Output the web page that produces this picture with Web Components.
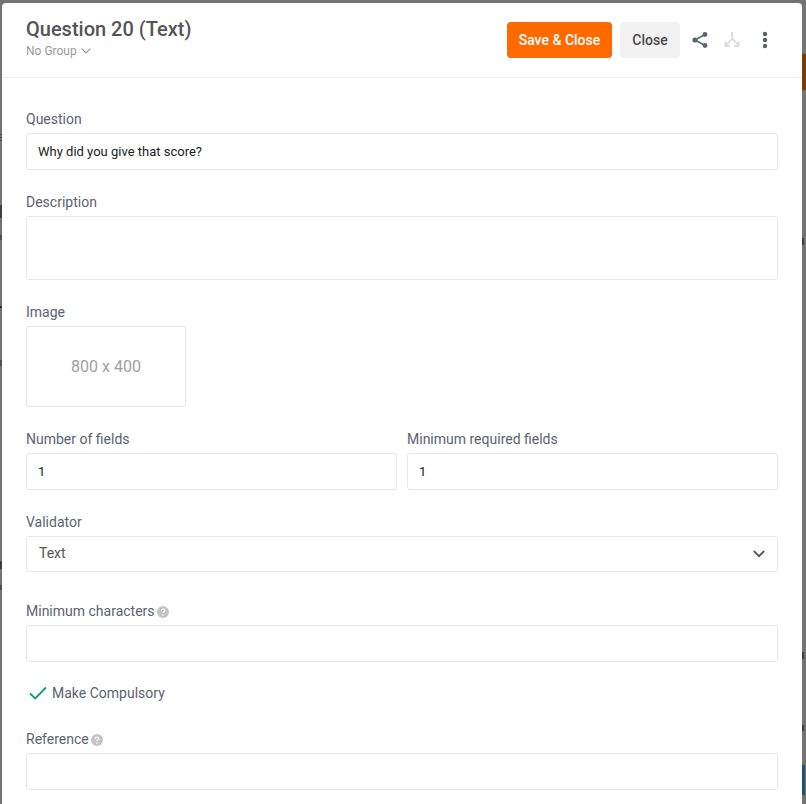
<!DOCTYPE html>
<html>
<head>
<meta charset="utf-8">
<title>Question 20</title>
<style>
  html, body { margin: 0; height: 100%; overflow: hidden; }
  body { font-family: Roboto, "Liberation Sans", sans-serif; }
</style>
</head>
<body>
<question-modal>
  <modal-header slot="header" title-text="Question 20 (Text)" group="No Group"></modal-header>
  <form-field label="Question"><text-box>Why did you give that score?</text-box></form-field>
  <form-field label="Description"><text-box tall></text-box></form-field>
  <form-field label="Image"><image-box>800 x 400</image-box></form-field>
  <field-row>
    <form-field label="Number of fields"><text-box>1</text-box></form-field>
    <form-field label="Minimum required fields"><text-box>1</text-box></form-field>
  </field-row>
  <form-field label="Validator" class="before-hint"><select-box>Text</select-box></form-field>
  <form-field label="Minimum characters" help><text-box></text-box></form-field>
  <check-option>Make Compulsory</check-option>
  <form-field label="Reference" help><text-box></text-box></form-field>
</question-modal>

<script>
class QuestionModal extends HTMLElement {
  connectedCallback() {
    this.attachShadow({ mode: "open" });
    this.shadowRoot.innerHTML = `
      <style>
        :host {
          display: block;
          box-sizing: border-box;
          height: 804px;
          padding: 3px 4px 0 2px;
          overflow: hidden;
          /* bits of the page behind the dimmed overlay */
          background:
            linear-gradient(#7a3c04, #7a3c04) 802px 54px / 4px 36px no-repeat,
            linear-gradient(#1f5273, #1f5273) 802px 765px / 3px 30px no-repeat,
            linear-gradient(#3a3f48, #3a3f48) 802px 238px / 2px 7px no-repeat,
            linear-gradient(#3f3f3f, #3f3f3f) 802px 652px / 2px 7px no-repeat,
            linear-gradient(#3f3f3f, #3f3f3f) 802px 725px / 2px 6px no-repeat,
            linear-gradient(#3b4048, #3b4048) 0 205px / 2px 13px no-repeat,
            linear-gradient(#4f4f5c, #4f4f5c) 0 235px / 2px 5px no-repeat,
            linear-gradient(#2c2c2c, #2c2c2c) 0 306px / 2px 2px no-repeat,
            linear-gradient(#4f4f5c, #4f4f5c) 0 360px / 2px 6px no-repeat,
            linear-gradient(#453a38, #453a38) 0 561px / 2px 8px no-repeat,
            linear-gradient(#4f4f5c, #4f4f5c) 0 585px / 2px 5px no-repeat,
            linear-gradient(#4a4a4a, #4a4a4a) 0 134px / 2px 1px no-repeat,
            linear-gradient(#4a4a4a, #4a4a4a) 0 137px / 2px 1px no-repeat,
            linear-gradient(#4a4a4a, #4a4a4a) 0 140px / 2px 1px no-repeat,
            #737373;
        }
        #panel {
          background: #fff;
          border-radius: 4px 4px 0 0;
          height: 860px;
        }
        #body {
          padding: 31px 24px 0;
        }
      </style>
      <div id="panel">
        <slot name="header"></slot>
        <div id="body"><slot></slot></div>
      </div>
    `;
  }
}

class ModalHeader extends HTMLElement {
  connectedCallback() {
    this.attachShadow({ mode: "open" });
    this.shadowRoot.innerHTML = `
      <style>
        :host {
          display: flex;
          box-sizing: border-box;
          height: 75px;
          padding: 19px 34px 0 24px;
          justify-content: space-between;
          align-items: flex-start;
          border-bottom: 1px solid #eee;
        }
        #title {
          color: #555;
          font-size: 20px;
          font-weight: 500;
          line-height: 15px;
        }
        #group {
          display: flex;
          align-items: center;
          gap: 4px;
          margin-top: 7px;
          color: #999;
          font-size: 12px;
          line-height: 14px;
        }
        #actions {
          display: flex;
          align-items: center;
        }
        button {
          box-sizing: border-box;
          height: 36px;
          border: 0;
          border-radius: 4px;
          font-family: inherit;
          font-size: 14px;
          font-weight: 500;
          padding: 0;
        }
        #save { width: 105px; background: #ff6a00; color: #fff; }
        #close { width: 60px; margin-left: 8px; background: #f2f2f2; color: #4a4a4a; }
        svg { display: block; }
        #share { margin-left: 12px; }
        #merge { margin-left: 16px; }
        #more { margin-left: 22px; }
      </style>
      <div>
        <div id="title"></div>
        <div id="group"><span id="groupName"></span>
          <svg width="10" height="6" viewBox="0 0 10 6" fill="none" stroke="#999" stroke-width="1.1"><path d="M.7.7 5 5l4.3-4.3"/></svg>
        </div>
      </div>
      <div id="actions">
        <button id="save">Save &amp; Close</button>
        <button id="close">Close</button>
        <svg id="share" width="16" height="18" viewBox="0 0 16 18" fill="#5c6670" stroke="#5c6670">
          <path d="M13 3.5 3 9l10 5.5" fill="none" stroke-width="1.5"/>
          <circle cx="13" cy="3.5" r="2.4" stroke="none"/>
          <circle cx="3" cy="9" r="2.6" stroke="none"/>
          <circle cx="13" cy="14.5" r="2.4" stroke="none"/>
        </svg>
        <svg id="merge" width="16" height="18" viewBox="0 0 16 18" fill="none" stroke="#d6d6d6" stroke-width="1.6">
          <path d="M8 1v6.5l6 6M7.6 8.5 2 14"/>
          <path d="M1.5 10.5V15H6M14.5 10.5V15H10"/>
        </svg>
        <svg id="more" width="6" height="18" viewBox="0 0 6 18" fill="#5a5f66">
          <circle cx="3" cy="3" r="2.2"/><circle cx="3" cy="9" r="2.2"/><circle cx="3" cy="15" r="2.2"/>
        </svg>
      </div>
    `;
    this.shadowRoot.getElementById("title").textContent = this.getAttribute("title-text");
    this.shadowRoot.getElementById("groupName").textContent = this.getAttribute("group");
  }
}

class FormField extends HTMLElement {
  connectedCallback() {
    this.attachShadow({ mode: "open" });
    const help = this.hasAttribute("help")
      ? `<svg width="12" height="12" viewBox="0 0 12 12"><circle cx="6" cy="6" r="6" fill="#c4c4c4"/><path d="M4.2 4.7C4.3 3.6 5 3 6 3s1.8.6 1.8 1.5c0 1.3-1.8 1.3-1.8 2.6" fill="none" stroke="#fff" stroke-width="1.2"/><circle cx="6" cy="9" r=".8" fill="#fff"/></svg>`
      : "";
    this.shadowRoot.innerHTML = `
      <style>
        :host {
          display: block;
          margin-bottom: 22px;
          min-width: 0;
        }
        :host(.before-hint) { margin-bottom: 29px; }
        #label {
          display: flex;
          align-items: center;
          gap: 2px;
          height: 20px;
          margin-bottom: 4px;
          color: #5c6370;
          font-size: 14px;
          line-height: 20px;
        }
        svg { margin-top: 2px; }
      </style>
      <div id="label"><span id="text"></span>${help}</div>
      <slot></slot>
    `;
    this.shadowRoot.getElementById("text").textContent = this.getAttribute("label");
  }
}

class FieldRow extends HTMLElement {
  connectedCallback() {
    this.attachShadow({ mode: "open" });
    this.shadowRoot.innerHTML = `
      <style>
        :host {
          display: grid;
          grid-template-columns: 1fr 1fr;
          column-gap: 10px;
        }
      </style>
      <slot></slot>
    `;
  }
}

class TextBox extends HTMLElement {
  connectedCallback() {
    this.attachShadow({ mode: "open" });
    this.shadowRoot.innerHTML = `
      <style>
        :host {
          display: block;
          box-sizing: border-box;
          height: 37px;
          padding: 0 11px;
          border: 1px solid #e8e8e8;
          border-radius: 3px;
          background: #fff;
          color: #222;
          font-size: 13px;
          line-height: 35px;
        }
        :host([tall]) { height: 64px; }
      </style>
      <slot></slot>
    `;
  }
}

class SelectBox extends HTMLElement {
  connectedCallback() {
    this.attachShadow({ mode: "open" });
    this.shadowRoot.innerHTML = `
      <style>
        :host {
          display: flex;
          align-items: center;
          justify-content: space-between;
          box-sizing: border-box;
          height: 36px;
          padding: 0 12px 2px;
          border: 1px solid #e8e8e8;
          border-radius: 3px;
          color: #555;
          font-size: 14px;
        }
        svg { margin-top: 2px; }
      </style>
      <span><slot></slot></span>
      <svg width="12" height="8" viewBox="0 0 12 8" fill="none" stroke="#4f5a66" stroke-width="1.8"><path d="M.8 1 6 6.2 11.2 1"/></svg>
    `;
  }
}

class ImageBox extends HTMLElement {
  connectedCallback() {
    this.attachShadow({ mode: "open" });
    this.shadowRoot.innerHTML = `
      <style>
        :host {
          display: flex;
          align-items: center;
          justify-content: center;
          box-sizing: border-box;
          width: 160px;
          height: 81px;
          border: 1px solid #e8e8e8;
          border-radius: 2px;
          color: #a0a0a0;
          font-size: 16px;
        }
      </style>
      <slot></slot>
    `;
  }
}

class CheckOption extends HTMLElement {
  connectedCallback() {
    this.attachShadow({ mode: "open" });
    this.shadowRoot.innerHTML = `
      <style>
        :host {
          display: flex;
          align-items: center;
          gap: 5px;
          height: 20px;
          margin: -1px 0 26px 3px;
          color: #5c6370;
          font-size: 14px;
        }
      </style>
      <svg width="18" height="14" viewBox="0 0 18 14" fill="none" stroke="#0c9a7f" stroke-width="1.8"><path d="M1 7.5 6.2 12.5 17 1.5"/></svg>
      <span><slot></slot></span>
    `;
  }
}

customElements.define("question-modal", QuestionModal);
customElements.define("modal-header", ModalHeader);
customElements.define("form-field", FormField);
customElements.define("field-row", FieldRow);
customElements.define("text-box", TextBox);
customElements.define("select-box", SelectBox);
customElements.define("image-box", ImageBox);
customElements.define("check-option", CheckOption);
</script>
</body>
</html>
